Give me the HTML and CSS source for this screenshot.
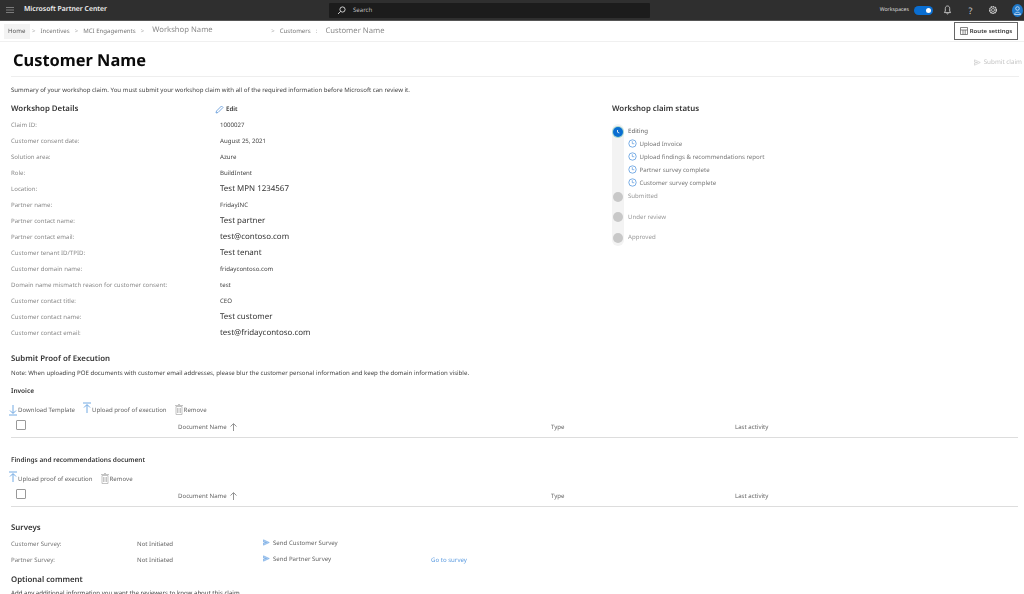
FILE: index.html
```html
<!DOCTYPE html>
<html lang="en">
<head>
<meta charset="utf-8">
<title>Customer Name</title>
<link rel="stylesheet" href="styles.css">
</head>
<body>
<header class="topbar">
  <div class="brand">
    <svg class="burger" width="10" height="6" viewBox="0 0 10 6"><path d="M1 .5h8M1 3h8M1 5.500h8" stroke="#8f8f8f" stroke-width=".8"/></svg>
    <span>Microsoft Partner Center</span>
  </div>
  <div class="search">
    <svg width="9" height="9" viewBox="0 0 9 9" fill="none"><circle cx="5.500" cy="3.500" r="2.600" stroke="#ddd" stroke-width=".9"/><path d="M3.600 5.400 1 8" stroke="#ddd" stroke-width=".9"/></svg>
    <span>Search</span>
  </div>
  <div class="tools">
    <span class="ws">Workspaces</span>
    <span class="toggle"><i></i></span>
    <svg width="9" height="10" viewBox="0 0 9 10" fill="none"><path d="M4.500 1C2.800 1 2.300 2.300 2.300 3.600V6L1.400 7.600H7.600L6.700 6V3.600C6.700 2.300 6.200 1 4.500 1ZM3.600 8.300C3.800 9.200 5.200 9.200 5.400 8.300" stroke="#ccc" stroke-width=".9"/></svg>
    <span class="q">?</span>
    <svg width="10" height="10" viewBox="0 0 10 10" fill="none"><circle cx="5" cy="5" r="3.300" stroke="#ccc" stroke-width="1.500" stroke-dasharray="1.600 .5"/><circle cx="5" cy="5" r="1.500" stroke="#ccc" stroke-width=".8"/></svg>
    <span class="avatar"><svg width="11" height="13" viewBox="0 0 11 13" fill="none"><circle cx="5.500" cy="4.500" r="1.800" stroke="#d5e6f7" stroke-width=".8"/><path d="M2.500 10.500C2.700 7.500 8.300 7.500 8.500 10.500Z" stroke="#d5e6f7" stroke-width=".8"/></svg></span>
  </div>
</header>

<nav class="crumbs">
  <span class="crumb home">Home</span><span class="sep">&gt;</span>
  <span class="crumb">Incentives</span><span class="sep">&gt;</span>
  <span class="crumb">MCI Engagements</span><span class="sep">&gt;</span>
  <span class="crumb big wsname">Workshop Name</span><span class="sep">&gt;</span>
  <span class="crumb">Customers</span><span class="sep">:</span>
  <span class="crumb big custname">Customer Name</span>
  <button class="route">
    <svg width="8" height="8" viewBox="0 0 8 8" fill="none"><path d="M.5.500h7v7h-7zM.5 3h7M3 3v4.500M5.200 3v4.500" stroke="#555" stroke-width=".7"/></svg>
    Route settings
  </button>
</nav>

<main class="page">
  <div class="titlebar">
    <h1>Customer Name</h1>
    <span class="submit">
      <svg width="7" height="7" viewBox="0 0 7 7" fill="none"><path d="M.5.800 6.300 3.500.5 6.200V4L3.500 3.500.5 3Z" stroke="#c4c4c4" stroke-width=".6"/></svg>
      Submit claim
    </span>
  </div>
  <p class="summary">Summary of your workshop claim. You must submit your workshop claim with all of the required information before Microsoft can review it.</p>

  <div class="cols">
    <section class="details">
      <div class="dhead">
        <h2>Workshop Details</h2>
        <span class="edit">
          <svg width="9" height="9" viewBox="0 0 9 9" fill="none"><path d="M1 8 1.500 6 6.500 1 8 2.500 3 7.500Z" stroke="#5b95d8" stroke-width=".8"/></svg>
          Edit
        </span>
      </div>
      <dl class="rows">
        <div class="row"><dt>Claim ID:</dt><dd>1000027</dd></div>
        <div class="row"><dt>Customer consent date:</dt><dd>August 25, 2021</dd></div>
        <div class="row"><dt>Solution area:</dt><dd>Azure</dd></div>
        <div class="row"><dt>Role:</dt><dd>BuildIntent</dd></div>
        <div class="row"><dt>Location:</dt><dd class="lg">Test MPN 1234567</dd></div>
        <div class="row"><dt>Partner name:</dt><dd>FridayINC</dd></div>
        <div class="row"><dt>Partner contact name:</dt><dd class="lg">Test partner</dd></div>
        <div class="row"><dt>Partner contact email:</dt><dd class="lg">test@contoso.com</dd></div>
        <div class="row"><dt>Customer tenant ID/TPID:</dt><dd class="lg">Test tenant</dd></div>
        <div class="row"><dt>Customer domain name:</dt><dd>fridaycontoso.com</dd></div>
        <div class="row"><dt>Domain name mismatch reason for customer consent:</dt><dd>test</dd></div>
        <div class="row"><dt>Customer contact title:</dt><dd>CEO</dd></div>
        <div class="row"><dt>Customer contact name:</dt><dd class="lg">Test customer</dd></div>
        <div class="row"><dt>Customer contact email:</dt><dd class="lg">test@fridaycontoso.com</dd></div>
      </dl>
    </section>

    <aside class="status">
      <h2>Workshop claim status</h2>
      <div class="track">
        <div class="step first"><span class="dot active"><svg width="6" height="6" viewBox="0 0 6 6" fill="none"><path d="M2.500 1v2.200L4.300 4" stroke="#fff" stroke-width=".8"/></svg></span><span class="lbl dark">Editing</span></div>
        <div class="sub"><svg class="clock" width="9" height="9" viewBox="0 0 9 9" fill="none"><circle cx="4.500" cy="4.500" r="3.700" stroke="#5b9be0" stroke-width=".8"/><path d="M4.300 2.200v2.500h2" stroke="#5b9be0" stroke-width=".7"/></svg>Upload Invoice</div>
        <div class="sub"><svg class="clock" width="9" height="9" viewBox="0 0 9 9" fill="none"><circle cx="4.500" cy="4.500" r="3.700" stroke="#5b9be0" stroke-width=".8"/><path d="M4.300 2.200v2.500h2" stroke="#5b9be0" stroke-width=".7"/></svg>Upload findings &amp; recommendations report</div>
        <div class="sub"><svg class="clock" width="9" height="9" viewBox="0 0 9 9" fill="none"><circle cx="4.500" cy="4.500" r="3.700" stroke="#5b9be0" stroke-width=".8"/><path d="M4.300 2.200v2.500h2" stroke="#5b9be0" stroke-width=".7"/></svg>Partner survey complete</div>
        <div class="sub"><svg class="clock" width="9" height="9" viewBox="0 0 9 9" fill="none"><circle cx="4.500" cy="4.500" r="3.700" stroke="#5b9be0" stroke-width=".8"/><path d="M4.300 2.200v2.500h2" stroke="#5b9be0" stroke-width=".7"/></svg>Customer survey complete</div>
        <div class="step"><span class="dot"></span><span class="lbl">Submitted</span></div>
        <div class="step spaced"><span class="dot"></span><span class="lbl">Under review</span></div>
        <div class="step spaced"><span class="dot"></span><span class="lbl">Approved</span></div>
      </div>
    </aside>
  </div>

  <section class="poe">
    <h2>Submit Proof of Execution</h2>
    <p class="note">Note: When uploading POE documents with customer email addresses, please blur the customer personal information and keep the domain information visible.</p>
    <h3>Invoice</h3>
    <div class="actions">
      <span class="act"><svg width="8" height="12" viewBox="0 0 8 12" fill="none"><path d="M4 1v8M1 6.500 4 9.500 7 6.500M0 11h8" stroke="#4f94dc" stroke-width=".8"/></svg>Download Template</span>
      <span class="act"><svg class="lift" width="8" height="12" viewBox="0 0 8 12" fill="none"><path d="M0 1h8M4 11V3M1 5.500 4 2.500 7 5.500" stroke="#4f94dc" stroke-width=".8"/></svg>Upload proof of execution</span>
      <span class="act"><svg width="8" height="11" viewBox="0 0 8 11" fill="none"><path d="M1 2.500h6V10.500H1zM0 1.500h8M3 .5h2M2.500 4v5M4 4v5M5.500 4v5" stroke="#aaa" stroke-width=".7"/></svg>Remove</span>
    </div>
    <div class="thead">
      <span class="check"></span>
      <span class="cname">Document Name <svg width="7" height="8" viewBox="0 0 7 8" fill="none"><path d="M3.500 8V1M.5 3.500 3.500.6 6.500 3.500" stroke="#666" stroke-width=".7"/></svg></span>
      <span>Type</span>
      <span>Last activity</span>
    </div>
    <h3 class="h-find">Findings and recommendations document</h3>
    <div class="actions">
      <span class="act"><svg class="lift" width="8" height="12" viewBox="0 0 8 12" fill="none"><path d="M0 1h8M4 11V3M1 5.500 4 2.500 7 5.500" stroke="#4f94dc" stroke-width=".8"/></svg>Upload proof of execution</span>
      <span class="act"><svg width="8" height="11" viewBox="0 0 8 11" fill="none"><path d="M1 2.500h6V10.500H1zM0 1.500h8M3 .5h2M2.500 4v5M4 4v5M5.500 4v5" stroke="#aaa" stroke-width=".7"/></svg>Remove</span>
    </div>
    <div class="thead">
      <span class="check"></span>
      <span class="cname">Document Name <svg width="7" height="8" viewBox="0 0 7 8" fill="none"><path d="M3.500 8V1M.5 3.500 3.500.6 6.500 3.500" stroke="#666" stroke-width=".7"/></svg></span>
      <span>Type</span>
      <span>Last activity</span>
    </div>
  </section>

  <section class="surveys">
    <h2>Surveys</h2>
    <div class="srow">
      <span class="sl">Customer Survey:</span><span class="sv">Not Initiated</span>
      <span class="ss"><svg width="7" height="7" viewBox="0 0 7 7" fill="none"><path d="M.5.800 6.300 3.500.5 6.200V4L3.500 3.500.5 3Z" fill="#b6d2f0" stroke="#5b9be0" stroke-width=".5"/></svg>Send Customer Survey</span>
    </div>
    <div class="srow">
      <span class="sl">Partner Survey:</span><span class="sv">Not Initiated</span>
      <span class="ss"><svg width="7" height="7" viewBox="0 0 7 7" fill="none"><path d="M.5.800 6.300 3.500.5 6.200V4L3.500 3.500.5 3Z" fill="#b6d2f0" stroke="#5b9be0" stroke-width=".5"/></svg>Send Partner Survey</span>
      <a class="go" href="#">Go to survey</a>
    </div>
  </section>

  <section class="comment">
    <h2>Optional comment</h2>
    <p class="note">Add any additional information you want the reviewers to know about this claim.</p>
  </section>
</main>
</body>
</html>
```

FILE: styles.css
```css
* { box-sizing: border-box; }
html, body { margin: 0; height: 594px; overflow: hidden; }
body { background: #fff; color: #333; font: 6.100px/1 "Noto Sans", sans-serif; filter: blur(.3px); text-rendering: geometricPrecision; }
h1, h2, h3, p, dl, dd { margin: 0; }

.topbar { height: 21px; background: #2f2f2f; border-bottom: 1px solid #555; display: flex; align-items: center; padding: 0 1px 0 5px; }
.brand { display: flex; align-items: center; gap: 9px; color: #f2f2f2; font-size: 6.850px; font-weight: 600; flex: 0 0 324px; }
.search { width: 321px; height: 15px; background: #1c1c1c; display: flex; align-items: center; gap: 7px; padding-left: 8px; color: #bbb; border-radius: 1px; }
.tools { margin-left: auto; display: flex; align-items: center; color: #ddd; }
.ws { font-size: 5.200px; margin-right: 5px; }
.toggle { width: 19px; height: 9px; border-radius: 5px; background: #0a6ed1; display: block; position: relative; margin-right: 10px; }
.toggle i { position: absolute; right: 2px; top: 2px; width: 5px; height: 5px; border-radius: 50%; background: #fff; }
.q { font-size: 9px; width: 9px; margin: 0 13px 0 14px; text-align: center; color: #ccc; }
.avatar { width: 11px; height: 13px; margin-left: 14px; border-radius: 50%; background: #1f78c8; display: flex; }

.crumbs { height: 21px; display: flex; align-items: center; padding: 0 6px 0 4px; border-bottom: 1px solid #f0f0f0; color: #777; }
.crumb { white-space: nowrap; }
.home { background: #f3f3f3; color: #555; padding: 4.500px 4px; height: 15px; margin-right: -3px; width: 26px; }
.sep { color: #aaa; padding: 0 5px; }
.big { font-size: 7.700px; color: #8a8a8a; padding-top: 2px; }
.wsname { flex: 0 0 114px; margin-left: 3px; padding-top: 0; }
.custname { margin-left: 3px; }
.route { margin-left: auto; width: 64px; height: 18px; background: #fff; border: 1px solid #666; display: flex; align-items: center; justify-content: center; gap: 2px; font: 600 6px "Noto Sans", sans-serif; color: #333; padding: 0; margin-bottom: 1px; }

.page { padding: 0 2px 0 11px; }
.titlebar { height: 35px; border-bottom: 1px solid #eee; display: flex; align-items: center; justify-content: space-between; margin-right: 3px; }
h1 { font-size: 16.400px; font-weight: 700; color: #0a0a0a; padding: 2px 0 0 2px; }
.submit { font-size: 6.300px; color: #c4c4c4; display: flex; align-items: center; gap: 3px; margin: 6px -3px 0 0; }
.summary { margin-top: 8px; color: #444; white-space: nowrap; height: 16px; line-height: 9px; }

.cols { display: flex; }
.details { flex: 0 0 601px; }
.dhead { display: flex; align-items: flex-end; height: 14px; }
h2 { font-size: 7.850px; font-weight: 600; color: #333; }
.dhead h2 { flex: 0 0 204px; line-height: 12px; }
.edit { font-size: 6.200px; font-weight: 600; color: #333; display: flex; align-items: center; gap: 2px; height: 12px; }
.rows { margin-top: 2px; }
.row { display: grid; grid-template-columns: 209px 1fr; height: 16px; align-items: center; }
dt { color: #8a8a8a; white-space: nowrap; }
dd { color: #444; }
.lg { font-size: 7.950px; color: #333; margin-top: 2px; }

.status h2 { line-height: 12px; margin-top: 2px; }
.track { margin-top: 10px; position: relative; }
.track::before { content: ""; position: absolute; left: 0; top: -1px; width: 12px; height: 122px; background: #f3f3f3; border-radius: 6px; }
.step { position: relative; display: flex; align-items: center; height: 13px; gap: 5px; }
.step.spaced { margin-top: 7.500px; }
.dot { width: 10px; height: 10px; margin-left: 1px; border-radius: 50%; background: #c8c8c8; display: flex; align-items: center; justify-content: center; }
.dot.active { background: #0a6ed1; box-shadow: 0 0 0 1px #a8d8d0; }
.lbl { color: #999; white-space: nowrap; }
.lbl.dark { color: #666; }
.sub { position: relative; height: 13px; display: flex; align-items: center; gap: 2.500px; padding-left: 16px; color: #777; white-space: nowrap; }
.clock { flex: none; margin-top: -2px; }

.poe { margin-top: 15px; }
.note { margin-top: 4px; color: #444; white-space: nowrap; line-height: 9px; }
h3 { font-size: 6.500px; line-height: 9px; font-weight: 600; color: #333; margin-top: 9px; }
.actions { display: flex; align-items: center; gap: 8px; height: 14px; margin: 8px 0 0 -2px; color: #666; }
.act { display: flex; align-items: center; gap: 1px; white-space: nowrap; }
.lift { margin-top: -4px; }
.thead { height: 21px; border-bottom: 1.500px solid #ddd; display: grid; grid-template-columns: 167px 373px 184px 1fr; align-items: center; margin-right: 4px; color: #666; padding-top: 1px; }
.check { width: 10px; height: 10px; border: 1px solid #999; border-radius: 1px; margin: -5px 0 0 5px; display: block; }
.cname { display: flex; align-items: center; gap: 3px; }
.h-find { margin-top: 17px; }

.surveys { margin-top: 18px; }
.srow { display: grid; grid-template-columns: 126px 124px 170px 1fr; height: 16px; align-items: center; color: #777; }
.surveys h2 { margin-bottom: 3px; }
.sv { color: #666; }
.ss { display: flex; align-items: center; gap: 3px; padding-left: 2px; color: #666; margin-top: -2px; }
.go { color: #5b9be0; text-decoration: none; }
.comment { margin-top: 9px; }
.comment .note { margin-top: 3px; }
```
